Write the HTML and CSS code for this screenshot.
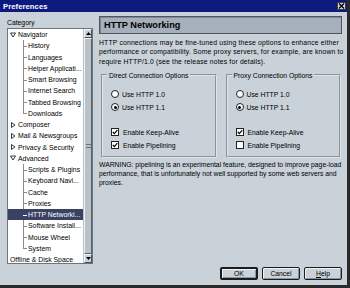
FILE: index.html
```html
<!DOCTYPE html>
<html>
<head>
    <meta charset="utf-8">
    <title>Preferences</title>
    <link rel="stylesheet" href="styles.css">
</head>
<body>
    <div class="window">
        <div class="titlebar">
            <span class="title">Preferences</span>
            <span class="close-btn">
                <svg width="7" height="6" viewBox="0 0 7 6"><path d="M1 0.5 L6 5.5 M6 0.5 L1 5.5" stroke="#000" stroke-width="1.4"/></svg>
            </span>
        </div>

        <div class="dialog-body">
            <div class="sidebar">
                <div class="category-label">Category</div>
                <div class="tree-box">
                    <div class="tree-list">
                        <div class="row top">
                            <svg class="twisty" width="6" height="6" viewBox="0 0 6 6"><path d="M0.5 1 L5.5 1 L3 5 Z" fill="none" stroke="#222" stroke-width="0.9"/></svg>Navigator
                        </div>
                        <div class="kids">
                            <div class="row child">History</div>
                            <div class="row child">Languages</div>
                            <div class="row child">Helper Applicati...</div>
                            <div class="row child">Smart Browsing</div>
                            <div class="row child">Internet Search</div>
                            <div class="row child">Tabbed Browsing</div>
                            <div class="row child">Downloads</div>
                        </div>
                        <div class="row top">
                            <svg class="twisty" width="6" height="6" viewBox="0 0 6 6"><path d="M1.5 0.5 L5 3 L1.5 5.5 Z" fill="none" stroke="#222" stroke-width="0.9"/></svg>Composer
                        </div>
                        <div class="row top">
                            <svg class="twisty" width="6" height="6" viewBox="0 0 6 6"><path d="M1.5 0.5 L5 3 L1.5 5.5 Z" fill="none" stroke="#222" stroke-width="0.9"/></svg>Mail &amp; Newsgroups
                        </div>
                        <div class="row top">
                            <svg class="twisty" width="6" height="6" viewBox="0 0 6 6"><path d="M1.5 0.5 L5 3 L1.5 5.5 Z" fill="none" stroke="#222" stroke-width="0.9"/></svg>Privacy &amp; Security
                        </div>
                        <div class="row top">
                            <svg class="twisty" width="6" height="6" viewBox="0 0 6 6"><path d="M0.5 1 L5.5 1 L3 5 Z" fill="none" stroke="#222" stroke-width="0.9"/></svg>Advanced
                        </div>
                        <div class="kids">
                            <div class="row child">Scripts &amp; Plugins</div>
                            <div class="row child">Keyboard Navi...</div>
                            <div class="row child">Cache</div>
                            <div class="row child">Proxies</div>
                            <div class="row child selected">HTTP Networki...</div>
                            <div class="row child">Software Install...</div>
                            <div class="row child">Mouse Wheel</div>
                            <div class="row child">System</div>
                        </div>
                        <div class="row plain">Offline &amp; Disk Space</div>
                    </div>
                    <div class="scrollbar">
                        <div class="sb-btn">
                            <svg width="5" height="3" viewBox="0 0 5 3"><path d="M0 3 L2.5 0 L5 3 Z" fill="#000"/></svg>
                        </div>
                        <div class="sb-thumb"><span class="grip"></span></div>
                        <div class="sb-btn">
                            <svg width="5" height="3" viewBox="0 0 5 3"><path d="M0 0 L5 0 L2.5 3 Z" fill="#000"/></svg>
                        </div>
                    </div>
                </div>
            </div>

            <div class="panel">
                <div class="panel-header">HTTP Networking</div>
                <p class="desc">
                    HTTP connections may be fine-tuned using these options to enhance either<br>
                    performance or compatibility. Some proxy servers, for example, are known to<br>
                    require HTTP/1.0 (see the release notes for details).
                </p>

                <div class="groups">
                    <fieldset class="group">
                        <legend>Direct Connection Options</legend>
                        <div class="opt"><span class="radio"></span>Use HTTP 1.0</div>
                        <div class="opt"><span class="radio checked"></span>Use HTTP 1.1</div>
                        <div class="opt spaced"><span class="check checked"><svg width="6" height="6" viewBox="0 0 6 6"><path d="M0.8 3 L2.4 4.7 L5.3 1" fill="none" stroke="#000" stroke-width="1.2"/></svg></span>Enable Keep-Alive</div>
                        <div class="opt"><span class="check checked"><svg width="6" height="6" viewBox="0 0 6 6"><path d="M0.8 3 L2.4 4.7 L5.3 1" fill="none" stroke="#000" stroke-width="1.2"/></svg></span>Enable Pipelining</div>
                    </fieldset>
                    <fieldset class="group">
                        <legend>Proxy Connection Options</legend>
                        <div class="opt"><span class="radio"></span>Use HTTP 1.0</div>
                        <div class="opt"><span class="radio checked"></span>Use HTTP 1.1</div>
                        <div class="opt spaced"><span class="check checked"><svg width="6" height="6" viewBox="0 0 6 6"><path d="M0.8 3 L2.4 4.7 L5.3 1" fill="none" stroke="#000" stroke-width="1.2"/></svg></span>Enable Keep-Alive</div>
                        <div class="opt"><span class="check"></span>Enable Pipelining</div>
                    </fieldset>
                </div>

                <p class="warning">
                    WARNING: pipelining is an experimental feature, designed to improve page-load<br>
                    performance, that is unfortunately not well supported by some web servers and<br>
                    proxies.
                </p>

                <div class="button-row">
                    <button class="btn default-btn">OK</button>
                    <button class="btn">Cancel</button>
                    <button class="btn"><u>H</u>elp</button>
                </div>
            </div>
        </div>
    </div>
</body>
</html>
```

FILE: styles.css
```css
* {
    box-sizing: border-box;
    margin: 0;
    padding: 0;
}

body {
    font-family: "Liberation Sans", Arial, sans-serif;
    font-size: 6.8px;
    color: #000;
    background-color: #c9d1d9;
    width: 350px;
    height: 288px;
    overflow: hidden;
}

.window {
    width: 350px;
    height: 288px;
    background-color: #c9d1d9;
    border-right: 3px solid #2a2a2a;
    border-bottom: 3px solid #2a2a2a;
    display: flex;
    flex-direction: column;
}

/* title bar */
.titlebar {
    height: 12px;
    background-color: #0c1a80;
    display: flex;
    align-items: center;
    justify-content: space-between;
    padding: 0 1px 0 3px;
}

.title {
    color: white;
    font-weight: bold;
    font-size: 7.6px;
    letter-spacing: 0.1px;
}

.close-btn {
    width: 9px;
    height: 8px;
    background-color: #d4d8dc;
    border: 1px solid #404040;
    display: flex;
    align-items: center;
    justify-content: center;
}

.dialog-body {
    flex: 1;
    display: flex;
    min-height: 0;
}

/* left category tree */
.sidebar {
    width: 99px;
    padding-left: 7px;
}

.category-label {
    padding: 6px 0 0 0;
    line-height: 9px;
    height: 16px;
}

.tree-box {
    width: 86px;
    height: 236px;
    background-color: white;
    border: 1px solid #6c747c;
    display: flex;
}

.tree-list {
    flex: 1;
    overflow: hidden;
    font-size: 6.9px;
}

.row {
    height: 11.25px;
    line-height: 11.25px;
    white-space: nowrap;
    overflow: hidden;
}

.row.top {
    padding-left: 2px;
}

.twisty {
    margin-right: 2px;
    vertical-align: -0.5px;
}

.row.plain {
    padding-left: 2px;
}

.kids {
    background: linear-gradient(#8a8a8a, #8a8a8a) no-repeat 15px 0 / 1px calc(100% - 5.5px);
}

.row.child::before {
    content: "";
    display: inline-block;
    width: 4px;
    height: 1px;
    background-color: #8a8a8a;
    margin: 0 1px 0 15px;
    vertical-align: middle;
}

.row.selected {
    background-color: #394262;
    color: white;
}

.row.selected::before {
    background-color: white;
}

.scrollbar {
    width: 9px;
    display: flex;
    flex-direction: column;
    background-color: #dde2e7;
    border-left: 1px solid #b8c0c8;
}

.sb-btn {
    height: 9px;
    background-color: #c9d1d9;
    border: 1px solid #4a525a;
    border-top-color: #f4f6f8;
    border-left-color: #f4f6f8;
    display: flex;
    align-items: center;
    justify-content: center;
}

.sb-thumb {
    flex: 1;
    background-color: #b9c1c9;
    border: 1px solid #5a626a;
    border-top-color: #eef1f4;
    border-left-color: #eef1f4;
    display: flex;
    align-items: center;
    justify-content: center;
}

.grip {
    width: 5px;
    height: 4px;
    border-top: 1px solid #6a727a;
    border-bottom: 1px solid #6a727a;
}

/* right panel */
.panel {
    width: 243px;
    display: flex;
    flex-direction: column;
    padding: 4px 0 5px 0;
}

.panel-header {
    height: 18px;
    background-color: #a6b0bb;
    border: 1px solid #4c5560;
    box-shadow: inset 1px 1px 0 #7e8894;
    font-weight: bold;
    font-size: 9.2px;
    line-height: 16px;
    padding-left: 4px;
}

.desc {
    margin-top: 4px;
    line-height: 9.3px;
    white-space: nowrap;
    letter-spacing: 0.18px;
}

.groups {
    display: flex;
    gap: 9px;
    margin: 5px 1px 0 2px;
}

.group {
    flex: 1;
    border: 2px groove #dfe4ea;
    padding: 8px 4px 4px 8px;
    min-width: 0;
}

.group legend {
    padding: 0 2px;
    margin-left: -4px;
    line-height: 9px;
}

.opt {
    height: 13px;
    display: flex;
    align-items: center;
    white-space: nowrap;
}

.opt.spaced {
    margin-top: 12px;
}

.radio {
    width: 8px;
    height: 8px;
    border-radius: 50%;
    border: 1px solid #222;
    background-color: white;
    margin-right: 3px;
    display: flex;
    align-items: center;
    justify-content: center;
}

.radio.checked::after {
    content: "";
    width: 3px;
    height: 3px;
    border-radius: 50%;
    background-color: #000;
}

.check {
    width: 8px;
    height: 8px;
    border: 1px solid #222;
    background-color: white;
    margin-right: 4px;
    display: flex;
    align-items: center;
    justify-content: center;
}

.warning {
    margin-top: 2px;
    line-height: 9.3px;
    white-space: nowrap;
}

.button-row {
    margin-top: auto;
    display: flex;
    justify-content: flex-end;
    gap: 4px;
}

.btn {
    width: 38px;
    height: 13px;
    font-family: inherit;
    font-size: 6.8px;
    color: #000;
    background-color: #c9d1d9;
    border: 1px solid #1c1c1c;
    border-radius: 2px;
    box-shadow: inset 1px 1px 0 #f0f3f6, inset -1px -1px 0 #8c959e;
}

.default-btn {
    border-width: 2px;
}
```
